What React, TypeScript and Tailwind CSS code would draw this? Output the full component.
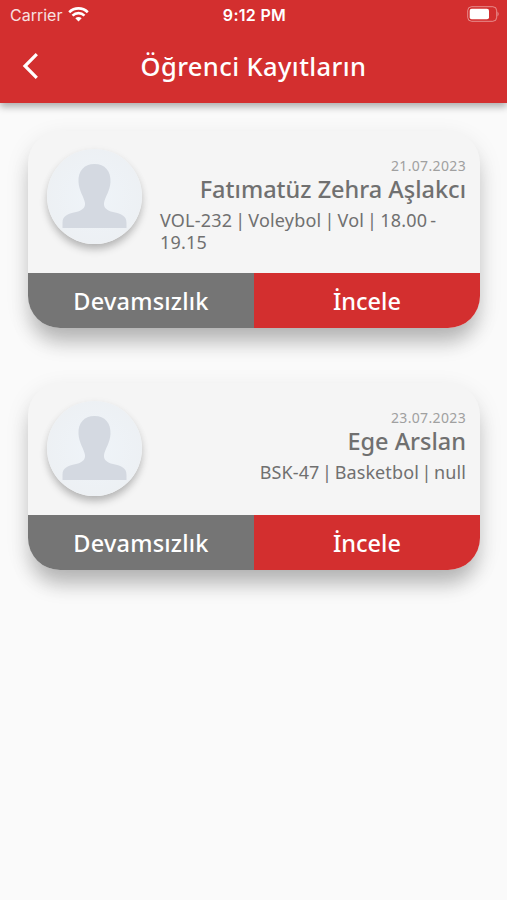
const records = [
  {
    date: "21.07.2023",
    name: "Fatımatüz Zehra Aşlakcı",
    details: "VOL-232 | Voleybol | Vol | 18.00 - 19.15",
    bodyClass: "h-[142px]",
    detailsClass: "tracking-[0.2px] [word-spacing:-1.9px]"
  },
  {
    date: "23.07.2023",
    name: "Ege Arslan",
    details: "BSK-47 | Basketbol | null",
    bodyClass: "h-[132px]",
    detailsClass: "tracking-[0.1px] [word-spacing:-2.2px]"
  }
];

function StatusBar() {
  return (
    <div className="grid h-[29px] grid-cols-3 items-center pl-[10px] pr-[8px] font-['Inter',sans-serif] text-white">
      <div className="flex items-center gap-[6px]">
        <span className="text-[16px] leading-none opacity-85">Carrier</span>
        <svg className="h-[15px] w-[21px]" viewBox="0 0 21 15" fill="none" stroke="currentColor">
          <path d="M1.2 5.2C6.5 .2 14.5 .2 19.8 5.2" strokeWidth="2.7" />
          <path d="M4.5 8.6C8 5.3 13 5.3 16.5 8.6" strokeWidth="2.6" />
          <path d="M7.3 11.2Q10.5 8.6 13.7 11.2L10.5 14.6Z" fill="currentColor" stroke="none" />
        </svg>
      </div>

      <span className="text-center text-[16px] font-semibold leading-none tracking-[0.3px]">9:12 PM</span>

      <svg className="mb-px h-[16px] w-[32px] justify-self-end" viewBox="0 0 32 16" fill="none">
        <rect x=".7" y=".7" width="29" height="14.6" rx="4" stroke="white" strokeOpacity=".45" />
        <rect x="2.7" y="2.7" width="19.3" height="10.6" rx="2" fill="white" />
        <path d="M30.6 5.5Q32.5 8 30.6 10.5Z" fill="white" fillOpacity=".55" />
      </svg>
    </div>
  );
}

function Avatar() {
  return (
    <div className="h-[95px] w-[95px] shrink-0 overflow-hidden rounded-full bg-radial from-[#eff4f9] to-[#eceff2] shadow-[0_6px_8px_-1px_rgba(0,0,0,0.24),0_2px_8px_rgba(0,0,0,0.06)]">
      <svg className="h-full w-full" viewBox="0 0 95 95">
        <path
          d="M47.5 15C37 15 31 22 31.5 33C32 42 37 48 38 54C38.5 59 35 61.5 29 63C20 65 15.5 67 15.5 74V79H79.5V74C79.5 67 75 65 66 63C60 61.5 56.5 59 57 54C58 48 63 42 63.5 33C64 22 58 15 47.5 15Z"
          fill="#d4d9e1"
        />
      </svg>
    </div>
  );
}

export default function App() {
  return (
    <div className="min-h-[900px] w-full bg-[#fafafa] font-['Noto_Sans',sans-serif]">
      <header className="h-[103px] bg-[#d32f2f] text-white shadow-[0_4px_7px_rgba(0,0,0,0.3)]">
        <StatusBar />
        <div className="grid h-[73px] grid-cols-[60px_1fr_60px] items-center">
          <svg className="ml-[22px] h-[28px] w-[18px]" viewBox="0 0 18 28" fill="none" stroke="currentColor" strokeWidth="3.2">
            <path d="M14.8 2.2L3 14L14.8 25.8" />
          </svg>
          <h1 className="whitespace-nowrap text-center text-[25.5px] font-medium leading-[34px] tracking-[0.4px]">
            Öğrenci Kayıtların
          </h1>
        </div>
      </header>

      <main className="flex flex-col gap-[55px] pl-[28px] pr-[27px] pt-[28px]">
        {records.map((record) => (
          <section
            key={record.date}
            className="overflow-hidden rounded-[32px] bg-[#f5f5f5] shadow-[0_18px_20px_-4px_rgba(0,0,0,0.22),0_8px_24px_rgba(0,0,0,0.1)]"
          >
            <div className={`flex pl-[19px] pr-[14px] pt-[18px] ${record.bodyClass}`}>
              <Avatar />
              <div className="ml-[18px] flex flex-1 flex-col items-end pt-[7px] text-[#707070]">
                <span className="text-[14px] leading-[20px] tracking-[0.35px] text-[#a0a0a0]">{record.date}</span>
                <h2 className="whitespace-nowrap text-[23.5px] font-medium leading-[26px]">
                  {record.name}
                </h2>
                <p className={`mt-[7px] text-[18px] leading-[22px] ${record.detailsClass}`}>
                  {record.details}
                </p>
              </div>
            </div>

            <div className="grid h-[55px] grid-cols-2 text-[23.5px] font-medium text-white">
              <button className="bg-[#757575] pt-[3px] tracking-[0.2px]">Devamsızlık</button>
              <button className="bg-[#d32f2f] pt-[3px]">İncele</button>
            </div>
          </section>
        ))}
      </main>
    </div>
  );
}
